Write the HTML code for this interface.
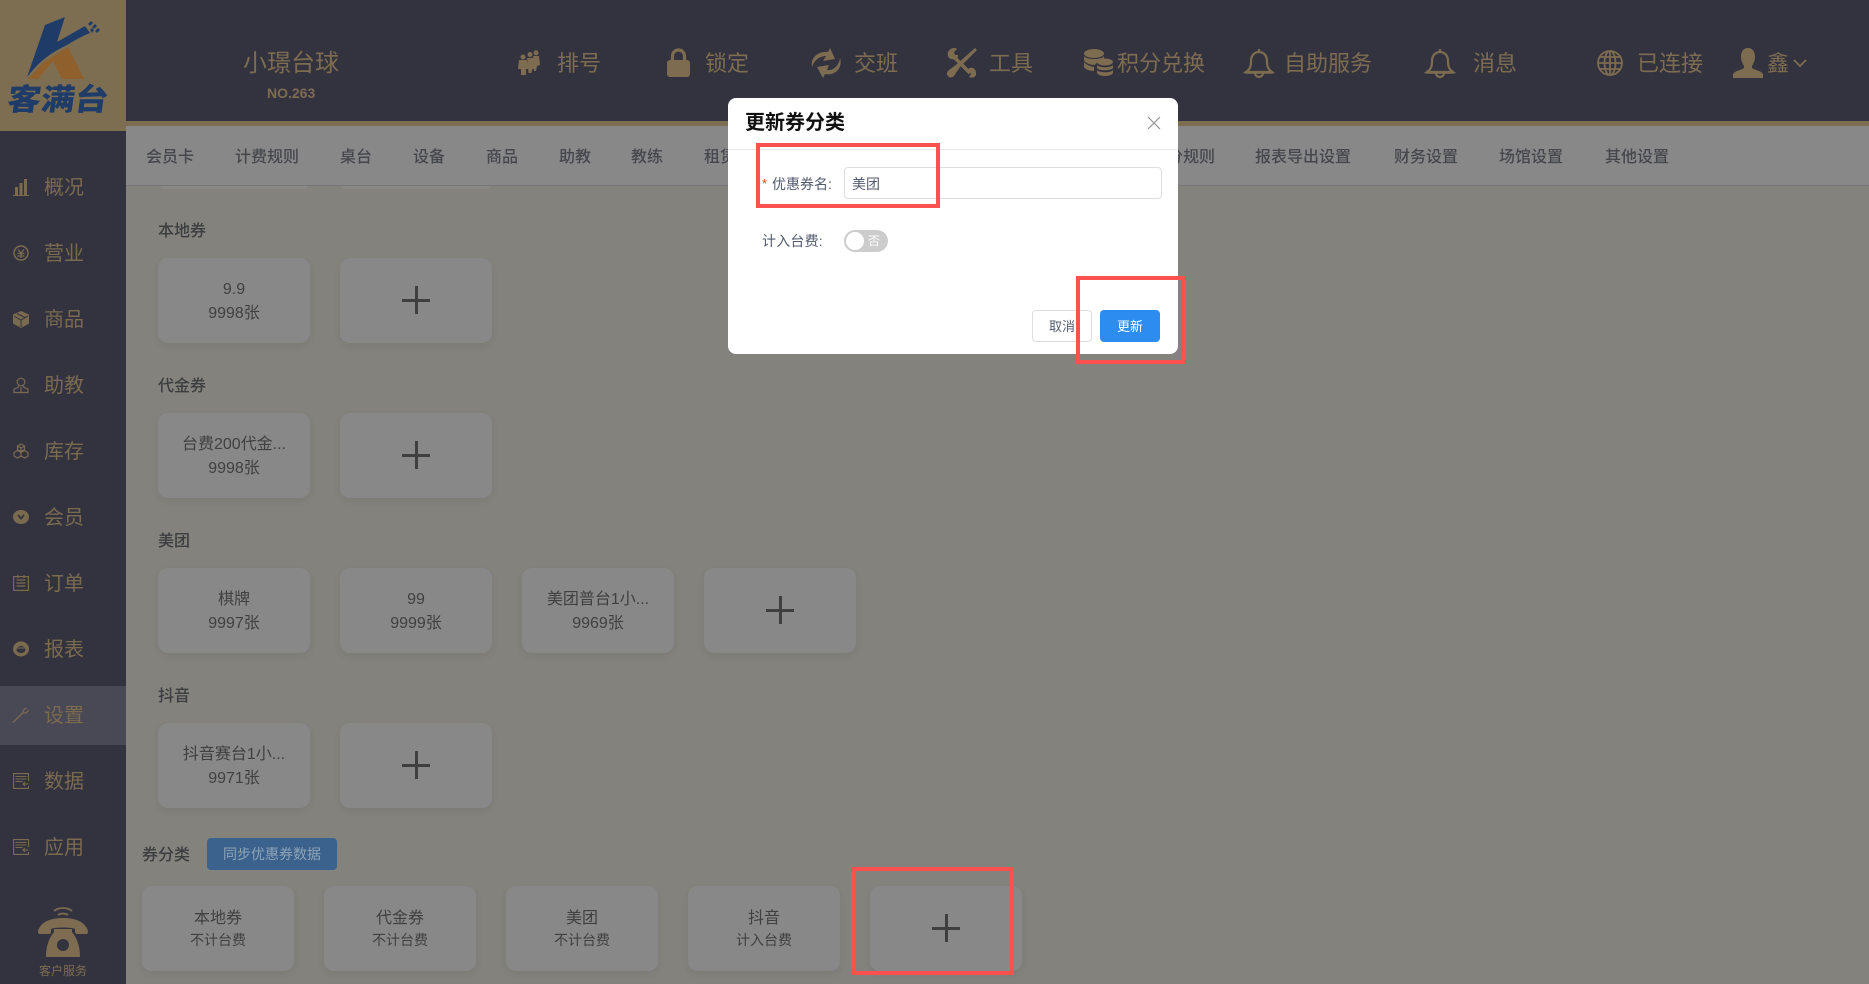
<!DOCTYPE html>
<html lang="zh"><head><meta charset="utf-8"><title>券分类</title>
<style>
html,body{margin:0;padding:0;width:1869px;height:984px;overflow:hidden;background:#83827c}
body{position:relative;font-family:"Liberation Sans","Noto Sans CJK SC",sans-serif}
.a{position:absolute;white-space:nowrap}
.s{color:#7d6c4f}
.n{font-size:22px;line-height:30px;top:49px;color:#7d6c4f}
.m{font-size:20px;line-height:28px;left:44px;color:#7a6a4e;margin-top:1px}
.t{font-size:16px;line-height:24px;top:146px;color:#45474c;font-weight:500}
.h{font-size:16px;line-height:24px;left:158px;color:#3c3d40;font-weight:500;margin-top:2px}
.c{position:absolute;width:152px;height:85px;background:#888;border-radius:10px;box-shadow:0 3px 8px rgba(0,0,0,.06);text-align:center;font-size:16px;color:#404040}
.c div{position:absolute;left:0;width:100%}
.c .l1{top:20px;line-height:24px}
.c .l2{top:44px;line-height:24px}
.c .l3{top:43px;line-height:22px;font-size:14px}
.p:before,.p:after{content:"";position:absolute;background:#3f3f3f}
.p:before{left:62px;top:40.5px;width:28px;height:3px}
.p:after{left:74.5px;top:28px;width:3px;height:28px}
.r{position:absolute;border:4px solid #fb5050;box-sizing:border-box;z-index:5}
svg{position:absolute;overflow:visible}
</style></head><body>

<!-- header -->
<div class="a" style="left:0;top:0;width:1869px;height:121px;background:#333340"></div>
<div class="a" style="left:0;top:121px;width:1869px;height:5px;background:#7e6e51"></div>
<div class="a" style="left:0;top:126px;width:1869px;height:59px;background:#888;border-bottom:1px solid #777"></div>
<!-- sidebar -->
<div class="a" style="left:0;top:0;width:126px;height:984px;background:#333340"></div>
<div class="a" style="left:0;top:686px;width:126px;height:59px;background:#494855"></div>
<!-- logo -->
<div class="a" style="left:0;top:0;width:126px;height:131px;background:#7e6e51"></div>
<svg style="left:0;top:0" width="126" height="131">
<path d="M28 79L44 62L68 47L84 79L62 79L53 61L38 79Z" fill="#8f5f2c"/>
<path d="M45 25L65 17L57 42L85 26L90 33C80 37 74 41 67 45C57 50 50 54 43 60C37 65 32 71 27 77Z" fill="#1f3c69"/>
<path d="M88 24l3-3 2 2-3 3zM92 27l3-3 2 2-3 3zM95 31l3-3 2 2-3 3zM90 30l2-2 2 2-2 3z" fill="#1f3c69"/>
</svg>
<div class="a" style="left:8px;top:79px;font-size:30px;line-height:36px;font-weight:900;color:#1f3c69;transform:skewX(-8deg) scaleX(1.12);transform-origin:left center;font-family:'Noto Sans CJK SC',sans-serif">客满台</div>

<!-- header brand -->
<div class="a s" style="left:243px;top:47px;font-size:24px;line-height:34px">小璟台球</div>
<div class="a s" style="left:267px;top:84px;font-size:14px;line-height:18px;font-weight:700">NO.263</div>

<!-- nav -->
<svg style="left:518px;top:50px" width="22" height="26" viewBox="0 0 22 26" fill="#7d6c4f">
<circle cx="5" cy="7" r="2.5"/><path d="M1 10h8l2 9H8v6H3v-6H0z"/>
<circle cx="12" cy="4.5" r="2.5"/><path d="M8.500 8h7l1 11h-2l-1 4h-3l-1-13z"/>
<circle cx="18" cy="2.800" r="2.500"/><path d="M15 6h6l1 9-3 1-1 5h-2l-.5-9z"/>
</svg>
<div class="a n" style="left:557px">排号</div>
<svg style="left:667px;top:48px" width="23" height="29" viewBox="0 0 23 29">
<path d="M5.500 13V8a6 6 0 0 1 12 0v5" fill="none" stroke="#7d6c4f" stroke-width="3.200"/>
<rect x="0" y="12" width="23" height="17" rx="3" fill="#7d6c4f"/></svg>
<div class="a n" style="left:705px">锁定</div>
<svg style="left:811px;top:48px" width="31" height="30" viewBox="0 0 31 30" fill="#7d6c4f">
<path d="M1 19C-1 10 7 3 17 4L19 0L24 11L12 13L15 8C9 8 3 12 1 19Z"/>
<path d="M29 10C32 20 24 28 14 26L12 30L6 19L18 17L16 22C22 23 28 18 29 10Z"/></svg>
<div class="a n" style="left:854px">交班</div>
<svg style="left:946px;top:48px" width="31" height="30" viewBox="0 0 31 30">
<path d="M8 9L24 25" stroke="#7d6c4f" stroke-width="3.500"/>
<path d="M2 4C4 0 9-1 11 1L8 4L9 7L12 7C13 10 9 12 5 11C2 10 1 7 2 4Z" fill="#7d6c4f"/>
<path d="M30 25C31 28 27 31 23 29L25 26L24 24L21 25C20 21 24 19 27 20C29 21 30 23 30 25Z" fill="#7d6c4f"/>
<path d="M29 0L31 2L14 19L8 28C6 30 3 30 2 28C0 26 1 24 3 22L11 16Z" fill="#7d6c4f"/></svg>
<div class="a n" style="left:989px">工具</div>
<svg style="left:1084px;top:49px" width="29" height="27" viewBox="0 0 29 27" fill="#7d6c4f">
<ellipse cx="10" cy="4.500" rx="10" ry="4.500"/>
<path d="M0 7c2 4 18 4 20 0v4c-5 1-8 3-9 5C6 16 1 14 0 11zM0 13c2 3 6 4 10 5v4C5 22 1 20 0 18z"/>
<ellipse cx="21" cy="13" rx="8" ry="3.500"/>
<path d="M13 16c2 3 14 3 16 0v3c-2 3-14 3-16 0zM13 21c2 3 14 3 16 0v3c-2 4-14 4-16 0z"/></svg>
<div class="a n" style="left:1117px">积分兑换</div>
<svg style="left:1244px;top:48px" width="30" height="30" viewBox="0 0 30 30" fill="none" stroke="#7d6c4f" stroke-width="2.200">
<path d="M15 1v3M15 4c-5 0-8 4-8 9 0 6-1 8-5 11h26c-4-3-5-5-5-11 0-5-3-9-8-9z"/><path d="M1 24.500h28" stroke-width="2.500"/><path d="M11 25a4 4 0 0 0 8 0"/></svg>
<div class="a n" style="left:1284px">自助服务</div>
<svg style="left:1425px;top:48px" width="30" height="30" viewBox="0 0 30 30" fill="none" stroke="#7d6c4f" stroke-width="2.200">
<path d="M15 1v3M15 4c-5 0-8 4-8 9 0 6-1 8-5 11h26c-4-3-5-5-5-11 0-5-3-9-8-9z"/><path d="M1 24.500h28" stroke-width="2.500"/><path d="M11 25a4 4 0 0 0 8 0"/></svg>
<div class="a n" style="left:1473px">消息</div>
<svg style="left:1597px;top:50px" width="26" height="26" viewBox="0 0 26 26" fill="none" stroke="#7d6c4f" stroke-width="1.800">
<circle cx="13" cy="13" r="12"/><ellipse cx="13" cy="13" rx="5.500" ry="12"/><path d="M13 1v24M1 13h24M3 7h20M3 19h20"/></svg>
<div class="a n" style="left:1637px">已连接</div>
<svg style="left:1733px;top:48px" width="30" height="30" viewBox="0 0 30 30" fill="#7d6c4f">
<path d="M15 0c5 0 7 4 7 9 0 4-2 7-3 9v2c2 2 11 3 11 7v3H0v-3c0-4 9-5 11-7v-2c-1-2-3-5-3-9 0-5 2-9 7-9z"/></svg>
<div class="a n" style="left:1767px">鑫</div>
<svg style="left:1793px;top:59px" width="14" height="9" viewBox="0 0 14 9" fill="none" stroke="#7d6c4f" stroke-width="1.800"><path d="M1 1l6 6 6-6"/></svg>

<!-- sidebar items -->
<svg style="left:13px;top:179px" width="16" height="17" viewBox="0 0 16 17" fill="#7a6a4e"><path d="M2 8h3v8H2zM6.500 4h3v12h-3zM11 0h3v16h-3zM0 16h16v1H0z"/></svg>
<div class="a m" style="top:173px">概况</div>
<svg style="left:13px;top:245px" width="16" height="16" viewBox="0 0 16 16" fill="none" stroke="#7a6a4e" stroke-width="1.500"><circle cx="8" cy="8" r="7"/><path d="M5 4.500l3 3.500 3-3.500M4.500 8.500h7M4.500 11h7M8 8v5" stroke-width="1.300"/></svg>
<div class="a m" style="top:239px">营业</div>
<svg style="left:13px;top:311px" width="16" height="17" viewBox="0 0 16 17" fill="#7a6a4e"><path d="M8 0l8 3.500v9L8 17 0 12.500v-9z"/><path d="M1 5l7 4 7-4M8 9v7M4 2.500l8 4" stroke="#333340" stroke-width="1" fill="none"/></svg>
<div class="a m" style="top:305px">商品</div>
<svg style="left:13px;top:377px" width="16" height="16" viewBox="0 0 16 16" fill="none" stroke="#7a6a4e" stroke-width="1.200"><circle cx="8" cy="5" r="3.800"/><path d="M5.500 8.500L5 10.500 1 12v3.500h14V12l-4-1.500-.5-2M8 10v5"/></svg>
<div class="a m" style="top:371px">助教</div>
<svg style="left:13px;top:443px" width="16" height="16" viewBox="0 0 16 16" fill="none" stroke="#7a6a4e" stroke-width="1.200"><path d="M8 1l3.500 2v3.500L8 8.500l-3.500-2V3zM4.500 7.500l3.500 2v3.500l-3.500 2-3.500-2V9.500zM11.500 7.500l3.500 2v3.500l-3.500 2-3.500-2V9.500zM4.500 3L8 5l3.500-2M8 5v3.500"/></svg>
<div class="a m" style="top:437px">库存</div>
<svg style="left:13px;top:510px" width="16" height="14" viewBox="0 0 16 14"><ellipse cx="8" cy="7" rx="8" ry="7" fill="#7a6a4e"/><path d="M5 5l3 3.500L11 5" stroke="#333340" stroke-width="1.800" fill="none"/></svg>
<div class="a m" style="top:503px">会员</div>
<svg style="left:13px;top:575px" width="16" height="16" viewBox="0 0 16 16" fill="none" stroke="#7a6a4e" stroke-width="1.200"><rect x=".6" y="1.600" width="14.800" height="13.800"/><path d="M3.500 5h9M3.500 8h9M3.500 11h9M5 0v3M11 0v3"/></svg>
<div class="a m" style="top:569px">订单</div>
<svg style="left:13px;top:641px" width="16" height="16" viewBox="0 0 16 16"><ellipse cx="8" cy="8" rx="8" ry="7.500" fill="#7a6a4e"/><ellipse cx="8" cy="8.500" rx="4.500" ry="3.500" fill="#333340"/><path d="M4 7h8" stroke="#7a6a4e" stroke-width="1"/></svg>
<div class="a m" style="top:635px">报表</div>
<svg style="left:13px;top:707px" width="16" height="16" viewBox="0 0 16 16" fill="none" stroke="#7a6a4e" stroke-width="1.300"><path d="M0 15.500L10 5.500M10 5.500C10 3 12 1.500 13.500 1M10.500 6c2 .5 4.500-1 5-3"/></svg>
<div class="a m" style="top:701px">设置</div>
<svg style="left:13px;top:773px" width="16" height="16" viewBox="0 0 16 16" fill="none" stroke="#7a6a4e" stroke-width="1.100"><path d="M15.500 8V.6H.6v14.800h14.900V13"/><path d="M2.500 3.500h11M2.500 6h11M2.500 8.500h7M15.500 11H10M12 9l-2 2 2 2"/></svg>
<div class="a m" style="top:767px">数据</div>
<svg style="left:13px;top:839px" width="16" height="16" viewBox="0 0 16 16" fill="none" stroke="#7a6a4e" stroke-width="1.100"><path d="M15.500 8V.6H.6v14.800h14.900V13"/><path d="M2.500 3.500h11M2.500 6h11M2.500 8.500h7M15.500 11H10M12 9l-2 2 2 2"/></svg>
<div class="a m" style="top:833px">应用</div>
<svg style="left:38px;top:907px" width="50" height="50" viewBox="0 0 50 50">
<path d="M16 4c5-4 13-4 18 0M20 8c3-2 7-2 10 0" fill="none" stroke="#7d6c4f" stroke-width="1.800"/>
<path d="M0 24C3 14 14 11 25 11s22 3 25 13c0 3-1 3-3 3h-8c-2 0-2-2-2-5-3-2-21-2-24 0 0 3 0 5-2 5H3c-2 0-3 0-3-3z" fill="#7d6c4f"/>
<path d="M16 22h18v3c5 6 8 14 8 25H8c0-11 3-19 8-25z" fill="#7d6c4f"/>
<circle cx="25" cy="38" r="6" fill="#333340"/></svg>
<div class="a s" style="left:39px;top:962px;font-size:12px;line-height:18px">客户服务</div>

<!-- tabs -->
<div class="a t" style="left:146px">会员卡</div>
<div class="a t" style="left:235px">计费规则</div>
<div class="a t" style="left:340px">桌台</div>
<div class="a t" style="left:413px">设备</div>
<div class="a t" style="left:486px">商品</div>
<div class="a t" style="left:559px">助教</div>
<div class="a t" style="left:631px">教练</div>
<div class="a t" style="left:704px">租赁</div>
<div class="a t" style="left:1151px">积分规则</div>
<div class="a t" style="left:1255px">报表导出设置</div>
<div class="a t" style="left:1394px">财务设置</div>
<div class="a t" style="left:1499px">场馆设置</div>
<div class="a t" style="left:1605px">其他设置</div>

<!-- stub cards under tab -->
<div class="a" style="left:160px;top:186px;width:148px;height:3px;background:#888;border-radius:0 0 8px 8px"></div>
<div class="a" style="left:342px;top:186px;width:148px;height:3px;background:#888;border-radius:0 0 8px 8px"></div>

<!-- sections -->
<div class="a h" style="top:218px">本地券</div>
<div class="c" style="left:158px;top:258px"><div class="l1">9.9</div><div class="l2">9998张</div></div>
<div class="c p" style="left:340px;top:258px"></div>

<div class="a h" style="top:373px">代金券</div>
<div class="c" style="left:158px;top:413px"><div class="l1">台费200代金...</div><div class="l2">9998张</div></div>
<div class="c p" style="left:340px;top:413px"></div>

<div class="a h" style="top:528px">美团</div>
<div class="c" style="left:158px;top:568px"><div class="l1">棋牌</div><div class="l2">9997张</div></div>
<div class="c" style="left:340px;top:568px"><div class="l1">99</div><div class="l2">9999张</div></div>
<div class="c" style="left:522px;top:568px"><div class="l1">美团普台1小...</div><div class="l2">9969张</div></div>
<div class="c p" style="left:704px;top:568px"></div>

<div class="a h" style="top:683px">抖音</div>
<div class="c" style="left:158px;top:723px"><div class="l1">抖音赛台1小...</div><div class="l2">9971张</div></div>
<div class="c p" style="left:340px;top:723px"></div>

<div class="a h" style="left:142px;top:842px">券分类</div>
<div class="a" style="left:207px;top:838px;width:130px;height:32px;background:#3a628c;border-radius:4px;color:#8fa3b8;font-size:14px;line-height:32px;text-align:center">同步优惠券数据</div>
<div class="c" style="left:142px;top:886px"><div class="l1" style="top:21px">本地券</div><div class="l3">不计台费</div></div>
<div class="c" style="left:324px;top:886px"><div class="l1" style="top:21px">代金券</div><div class="l3">不计台费</div></div>
<div class="c" style="left:506px;top:886px"><div class="l1" style="top:21px">美团</div><div class="l3">不计台费</div></div>
<div class="c" style="left:688px;top:886px"><div class="l1" style="top:21px">抖音</div><div class="l3">计入台费</div></div>
<div class="c p" style="left:870px;top:886px"></div>

<!-- modal -->
<div class="a" style="left:728px;top:98px;width:450px;height:256px;background:#fff;border-radius:8px;z-index:3">
  <div class="a" style="left:17px;top:11px;font-size:20px;line-height:28px;font-weight:700;color:#111">更新券分类</div>
  <div class="a" style="left:0;top:51px;width:450px;height:1px;background:#e8eaec"></div>
  <svg style="left:420px;top:19px" width="12" height="12" viewBox="0 0 12 12" stroke="#8f8f8f" stroke-width="1.100"><path d="M0 0l12 12M12 0L0 12"/></svg>
  <div class="a" style="left:34px;top:77px;font-size:13px;line-height:18px;color:#ed4014">*</div>
  <div class="a" style="left:44px;top:77px;font-size:14px;line-height:18px;color:#515a6e">优惠券名:</div>
  <div class="a" style="left:116px;top:69px;width:318px;height:32px;box-sizing:border-box;border:1px solid #dcdee2;border-radius:4px;font-size:14px;line-height:32px;padding-left:7px;color:#515a6e">美团</div>
  <div class="a" style="left:34px;top:134px;font-size:14px;line-height:18px;color:#515a6e;letter-spacing:.2px">计入台费:</div>
  <div class="a" style="left:116px;top:132px;width:44px;height:22px;background:#ccc;border-radius:11px"></div>
  <div class="a" style="left:118px;top:134px;width:18px;height:18px;background:#fff;border-radius:50%"></div>
  <div class="a" style="left:140px;top:133px;font-size:12px;line-height:20px;color:#fff">否</div>
  <div class="a" style="left:304px;top:212px;width:60px;height:32px;box-sizing:border-box;border:1px solid #dcdee2;border-radius:4px;font-size:13px;line-height:31px;text-align:center;color:#515a6e">取消</div>
  <div class="a" style="left:372px;top:212px;width:60px;height:32px;background:#2d8cf0;border-radius:4px;font-size:13px;line-height:33px;text-align:center;color:#fff">更新</div>
</div>

<!-- red annotations -->
<div class="r" style="left:756px;top:143px;width:184px;height:65px"></div>
<div class="r" style="left:1076px;top:276px;width:110px;height:88px"></div>
<div class="r" style="left:851px;top:867px;width:163px;height:108px"></div>
</body></html>
